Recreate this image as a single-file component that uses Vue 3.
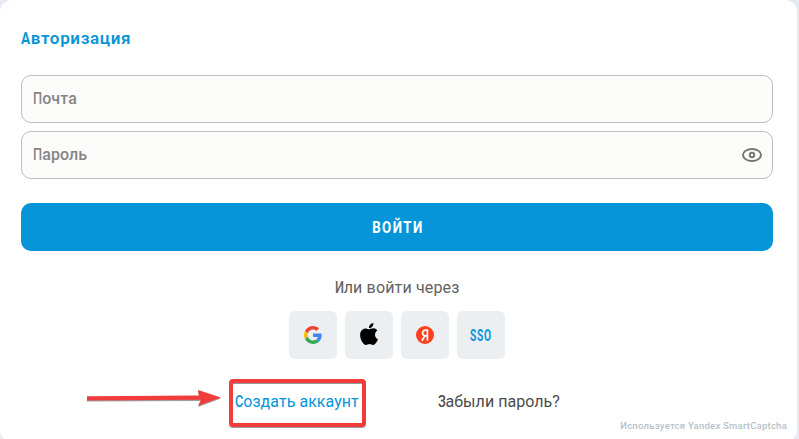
<script setup>
import { ref } from 'vue'

const email = ref('')
const password = ref('')
const visible = ref(false)
</script>

<template>
  <main class="page">
    <form class="card" @submit.prevent>
      <h1 class="title"><span class="cap">А</span>вторизация</h1>
      <label class="field">
        <input v-model="email" type="email" placeholder=" " aria-label="Почта" />
        <span class="hint"><span class="cap">П</span>очта</span>
      </label>
      <label class="field">
        <input v-model="password" :type="visible ? 'text' : 'password'" placeholder=" " aria-label="Пароль" />
        <span class="hint"><span class="cap">П</span>ароль</span>
        <button class="eye" type="button" aria-label="Показать пароль" @click="visible = !visible">
          <svg width="20" height="14" viewBox="0 0 20 14" fill="none" stroke="#777774" stroke-width="2">
            <ellipse cx="10" cy="7" rx="9" ry="6" />
            <circle cx="10" cy="7" r="2.2" />
          </svg>
        </button>
      </label>
      <button class="submit" type="submit"><span>ВОЙТИ</span></button>
      <p class="via"><span class="cap">И</span>ли войти через</p>
      <div class="providers">
        <button type="button" aria-label="Google">
          <svg width="18" height="18" viewBox="0 0 48 48">
            <path fill="#EA4335" d="M24 9.5c3.54 0 6.71 1.22 9.21 3.6l6.85-6.85C35.9 2.38 30.47 0 24 0 14.62 0 6.51 5.38 2.56 13.22l7.98 6.19C12.43 13.72 17.74 9.5 24 9.5z" />
            <path fill="#4285F4" d="M46.98 24.55c0-1.57-.15-3.09-.38-4.55H24v9.02h12.94c-.58 2.96-2.26 5.48-4.78 7.18l7.73 6c4.51-4.18 7.09-10.36 7.09-17.65z" />
            <path fill="#FBBC05" d="M10.53 28.59A14.5 14.5 0 0 1 9.77 24c0-1.6.27-3.14.76-4.59l-7.98-6.19A23.9 23.9 0 0 0 0 24c0 3.88.92 7.54 2.56 10.78l7.97-6.19z" />
            <path fill="#34A853" d="M24 48c6.48 0 11.93-2.13 15.89-5.81l-7.73-6c-2.15 1.45-4.92 2.3-8.16 2.3-6.26 0-11.57-4.22-13.47-9.91l-7.98 6.19C6.51 42.62 14.62 48 24 48z" />
          </svg>
        </button>
        <button type="button" aria-label="Apple">
          <svg class="apple" width="18" height="22" viewBox="0 0 814 1000">
            <path d="M788 341c-6 4-108 62-108 190 0 149 130 201 134 202-1 4-21 72-69 142-42 61-87 123-154 123s-85-39-163-39c-76 0-103 40-165 40s-105-57-155-127C50 790 3 663 3 542c0-194 126-297 251-297 66 0 121 43 163 43 39 0 101-46 177-46 28 0 131 3 194 99zM555 160c31-37 53-88 53-139 0-7-1-14-2-20-50 2-110 34-146 76-28 32-55 83-55 135 0 8 1 16 2 18 3 1 8 2 13 2 46 0 103-31 135-72z" />
          </svg>
        </button>
        <button type="button" aria-label="Яндекс">
          <svg width="18" height="18" viewBox="0 0 18 18">
            <circle cx="9" cy="9" r="9" fill="#FC3F1D" />
            <path d="M11.4 3.2v11.6M11.4 4.1H9.6C7.7 4.1 6.6 5.2 6.6 7s1.1 2.8 3 2.8h1.8M8.9 9.7 5.9 14.8" fill="none" stroke="#fff" stroke-width="1.7" />
          </svg>
        </button>
        <button type="button" class="sso"><span>SSO</span></button>
      </div>
      <nav class="links">
        <a class="create"><span class="cap">С</span>оздать аккаунт</a>
        <a class="forgot"><span class="cap">З</span>абыли пароль?</a>
      </nav>
    </form>
    <small class="captcha">Используется Yandex SmartCaptcha</small>
    <svg class="arrow" width="138" height="20" viewBox="0 0 138 20">
      <path d="M0 7.5 112 7 111 1 134 8.5 111 17 114 11 0 11.6z" fill="#777" opacity=".7" />
      <path d="M0 6.2 112 5.5 111 0 134 7.5 111 15.7 114 9.8 0 10.4z" fill="#f23c3c" />
    </svg>
    <div class="highlight"></div>
  </main>
</template>

<style>
body { overflow: hidden; }
</style>

<style scoped>
* { box-sizing: border-box; }
.page {
  position: relative;
  height: 439px;
  overflow: hidden;
  background: #e6eaf2;
  font-family: Roboto, "Liberation Sans", sans-serif;
}
.card {
  display: flex;
  flex-direction: column;
  width: 797px;
  height: 442px;
  padding: 27px 24px 0 21px;
  background: #fff;
  border-radius: 12px;
}
.cap {
  display: inline-block;
  margin-right: -2.3px;
  font-weight: 500;
  transform: scaleX(.8);
  transform-origin: left;
}
.title {
  margin: 0 0 26px;
  color: #0695d8;
  font-size: 17px;
  font-weight: 600;
  line-height: 22px;
  letter-spacing: .65px;
}
.title .cap { font-weight: 700; }
.field {
  position: relative;
  display: flex;
  align-items: center;
  height: 48px;
  margin-bottom: 8px;
  padding: 0 10px 0 11px;
  border: 1px solid #b5bec9;
  border-radius: 10px;
  background: #fcfcfa;
}
input {
  position: absolute;
  inset: 0;
  width: 100%;
  padding: 0 40px 0 11px;
  border: 0;
  outline: 0;
  background: transparent;
  font: 16px Roboto, sans-serif;
}
input:not(:placeholder-shown) + .hint { visibility: hidden; }
.hint {
  color: #858585;
  font-size: 16px;
  font-weight: 500;
  line-height: 20px;
  letter-spacing: .1px;
}
button { border: 0; padding: 0; font-family: inherit; cursor: pointer; }
.eye {
  position: relative;
  display: flex;
  margin-left: auto;
  background: none;
}
.submit {
  height: 48px;
  margin-top: 16px;
  border-radius: 10px;
  background: #0695d8;
  color: #fff;
  font-size: 17px;
  font-weight: 700;
  letter-spacing: 1.8px;
}
.submit span { display: inline-block; transform: translateX(1px) scaleX(.78); }
.via {
  margin: 26px 0 13px;
  color: #626262;
  font-size: 16px;
  font-weight: 450;
  line-height: 21px;
  letter-spacing: .15px;
  text-align: center;
}
.providers { display: flex; justify-content: center; gap: 8px; }
.providers button {
  display: flex;
  align-items: center;
  justify-content: center;
  width: 48px;
  height: 48px;
  border-radius: 6px;
  background: #eceff2;
}
.apple { margin-bottom: 3px; }
.sso {
  color: #0695d8;
  font-size: 16px;
  font-weight: 700;
  letter-spacing: 1px;
}
.sso span { display: inline-block; transform: scaleX(.64); }
.links {
  display: flex;
  gap: 79px;
  padding: 32px 0 0 214px;
  font-size: 16px;
  font-weight: 450;
  line-height: 22px;
  letter-spacing: .05px;
  white-space: nowrap;
}
.create { width: 124px; color: #0695d8; }
.forgot { color: #4c4c4c; }
.captcha {
  position: absolute;
  right: 12px;
  bottom: 7px;
  color: #b5bfc9;
  font-size: 9.5px;
  font-weight: 500;
  line-height: 12px;
  letter-spacing: .24px;
}
.arrow { position: absolute; left: 87px; top: 390px; }
.highlight {
  position: absolute;
  left: 229px;
  top: 379px;
  width: 137px;
  height: 48px;
  border: 4px solid #f23c3c;
  border-radius: 4px;
  box-shadow: 0 1px 0 #999, inset 0 1px 0 #999;
}
</style>
